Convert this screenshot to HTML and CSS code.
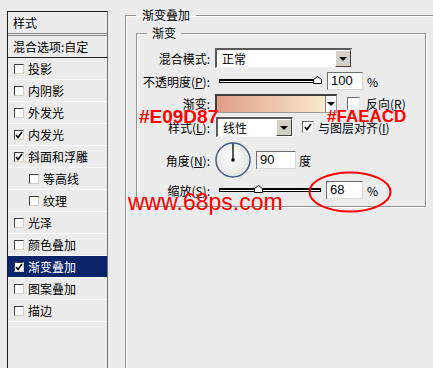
FILE: index.html
```html
<!DOCTYPE html>
<html lang="zh-CN">
<head>
  <meta charset="UTF-8">
  <title>图层样式 - 渐变叠加</title>
  <link rel="stylesheet" href="styles.css">
</head>
<body>

<div class="dialog">

  <div class="style-list">
    <div class="list-head">样式</div>
    <div class="list-blend">混合选项:自定</div>
    <div class="list-row"><span class="cb"></span>投影</div>
    <div class="list-row"><span class="cb"></span>内阴影</div>
    <div class="list-row"><span class="cb"></span>外发光</div>
    <div class="list-row"><span class="cb on"><svg viewBox="0 0 8 8"><polyline points="1,4 3,6.5 7,1" /></svg></span>内发光</div>
    <div class="list-row"><span class="cb on"><svg viewBox="0 0 8 8"><polyline points="1,4 3,6.5 7,1" /></svg></span>斜面和浮雕</div>
    <div class="list-row sub"><span class="cb"></span>等高线</div>
    <div class="list-row sub"><span class="cb"></span>纹理</div>
    <div class="list-row"><span class="cb"></span>光泽</div>
    <div class="list-row"><span class="cb"></span>颜色叠加</div>
    <div class="list-row active"><span class="cb on"><svg viewBox="0 0 8 8"><polyline points="1,4 3,6.5 7,1" /></svg></span>渐变叠加</div>
    <div class="list-row"><span class="cb"></span>图案叠加</div>
    <div class="list-row"><span class="cb"></span>描边</div>
  </div>

  <div class="settings">
    <fieldset class="group outer">
      <legend>渐变叠加</legend>
      <fieldset class="group inner">
        <legend>渐变</legend>

        <div class="row r-mode">
          <span class="label">混合模式:</span>
          <div class="select mode">正常<span class="drop"><i></i></span></div>
        </div>

        <div class="row r-opacity">
          <span class="label">不透明度(<u>P</u>):</span>
          <div class="slider">
            <span class="track"></span>
            <svg class="thumb" style="left: 98px" viewBox="0 0 9 8"><path d="M0.5 7.5 V3.5 L4.5 0.5 L8.5 3.5 V7.5 Z" /></svg>
          </div>
          <div class="field w36">100</div>
          <span class="unit">%</span>
        </div>

        <div class="row r-gradient">
          <span class="label">渐变:</span>
          <div class="gradient-box"><span class="ramp"></span><span class="ramp-drop"><i></i></span></div>
          <span class="check"></span>
          <span>反向(<u>R</u>)</span>
        </div>

        <div class="row r-style">
          <span class="label">样式(<u>L</u>):</span>
          <div class="select kind">线性<span class="drop"><i></i></span></div>
          <span class="check on"><svg viewBox="0 0 8 8"><polyline points="1,4 3,6.5 7,1" /></svg></span>
          <span>与图层对齐(<u>I</u>)</span>
        </div>

        <div class="row r-angle">
          <span class="label">角度(<u>N</u>):</span>
          <svg class="dial" viewBox="0 0 36 36">
            <defs>
              <radialGradient id="dialFill" cx="0.45" cy="0.4" r="0.6">
                <stop offset="0" stop-color="#ffffff" />
                <stop offset="1" stop-color="#e4e4e0" />
              </radialGradient>
            </defs>
            <circle cx="18" cy="18" r="17" fill="url(#dialFill)" stroke="#4c5c86" stroke-width="1.5" />
            <line x1="18" y1="18" x2="18" y2="1.5" stroke="#000" stroke-width="1.3" />
            <rect x="16.5" y="16.5" width="3" height="3" fill="#000" />
          </svg>
          <div class="field w40">90</div>
          <span class="unit">度</span>
        </div>

        <div class="row r-scale">
          <span class="label">缩放(<u>S</u>):</span>
          <div class="slider">
            <span class="track"></span>
            <svg class="thumb" style="left: 39px" viewBox="0 0 9 8"><path d="M0.5 7.5 V3.5 L4.5 0.5 L8.5 3.5 V7.5 Z" /></svg>
          </div>
          <div class="field w37">68</div>
          <span class="unit">%</span>
        </div>

      </fieldset>
    </fieldset>
  </div>

  <span class="note note-start">#E09D87</span>
  <span class="note note-end">#FAEACD</span>
  <span class="note note-site">www.68ps.com</span>
  <svg class="note-ring" viewBox="0 0 84 42"><ellipse cx="42" cy="21" rx="40.5" ry="19.5" /></svg>

</div>

</body>
</html>
```

FILE: styles.css
```css
body {
  margin: 0;
  background: #ececec;
  font-family: "Noto Sans CJK SC", "Liberation Sans", sans-serif;
  font-size: 12px;
  color: #000;
  overflow: hidden;
}

.dialog {
  position: relative;
  display: flex;
  height: 368px;
  overflow: hidden;
}

/* left list of layer styles */
.style-list {
  box-sizing: border-box;
  width: 101px;
  margin: 11px 0 0 7px;
  border: 1px solid #1a1a1a;
  border-bottom: none;
  border-right-color: #707070;
  flex-shrink: 0;
}

.list-head {
  height: 21px;
  line-height: 21px;
  padding-left: 5px;
  border-bottom: 3px double #8a8a8a;
}

.list-blend {
  box-sizing: border-box;
  height: 22px;
  line-height: 21px;
  padding-left: 5px;
  border-bottom: 1px solid #222;
}

.list-row {
  box-sizing: border-box;
  display: flex;
  align-items: center;
  height: 22px;
  padding-left: 6px;
  border-bottom: 1px solid #fafafa;
}

.list-row.sub {
  padding-left: 21px;
}

.list-row.active {
  background: #0a246a;
  color: #fff;
}

.cb {
  box-sizing: border-box;
  width: 10px;
  height: 10px;
  margin-right: 4px;
  background: #fff;
  border-top: 1px solid #404040;
  border-left: 1px solid #404040;
  border-bottom: 1px solid #d4d0c8;
  border-right: 1px solid #d4d0c8;
  display: flex;
}

.cb svg,
.check svg {
  width: 100%;
  height: 100%;
}

.cb polyline,
.check polyline {
  fill: none;
  stroke: #000;
  stroke-width: 1.6;
}

/* right settings */
.settings {
  flex: 1;
  overflow: hidden;
}

.group {
  margin: 0;
  border: 1px solid #919191;
  box-shadow: inset 1px 1px 0 #fff, 1px 1px 0 #fff;
}

.group legend {
  line-height: 16px;
  padding: 0 5px;
}

.outer {
  width: 420px;
  margin: 7px 0 0 17px;
  padding: 0 0 0 10px;
  border-right: none;
  border-bottom: none;
  height: 400px;
}

.outer > legend {
  padding: 0 6px 0 6px;
}

.inner {
  box-sizing: border-box;
  width: 290px;
  margin-top: 2px;
  padding: 7px 0 7px 5px;
}

.inner > legend {
  margin-left: 5px;
}

.row {
  display: flex;
  align-items: center;
  white-space: nowrap;
}

.label {
  width: 68px;
  margin-right: 5px;
  text-align: right;
}

.r-mode { height: 20px; }
.r-opacity { height: 20px; margin-top: 3px; }
.r-gradient { height: 20px; margin-top: 2px; }
.r-style { height: 20px; margin-top: 4px; }
.r-angle { height: 38px; margin-top: 4px; }
.r-scale { height: 18px; margin-top: 2px; }

.select {
  box-sizing: border-box;
  display: flex;
  align-items: center;
  justify-content: space-between;
  height: 20px;
  padding-left: 5px;
  background: #fff;
  border-top: 2px solid #5a5a5a;
  border-left: 2px solid #5a5a5a;
  border-bottom: 1px solid #f4f4f4;
  border-right: 1px solid #f4f4f4;
}

.select.mode { width: 137px; }
.select.kind { width: 77px; margin-left: 1px; }

.drop {
  box-sizing: border-box;
  display: flex;
  align-items: center;
  justify-content: center;
  width: 16px;
  height: 17px;
  background: #d4d0c8;
  border-top: 1px solid #fff;
  border-left: 1px solid #fff;
  border-bottom: 1px solid #404040;
  border-right: 1px solid #404040;
}

.drop i,
.ramp-drop i {
  width: 0;
  height: 0;
  border-left: 4px solid transparent;
  border-right: 4px solid transparent;
  border-top: 4px solid #000;
}

.slider {
  position: relative;
  width: 108px;
  height: 18px;
  display: flex;
  align-items: center;
}

.track {
  box-sizing: border-box;
  margin-left: 4px;
  width: 102px;
  height: 4px;
  background: #fff;
  border: 1px solid #000;
  border-top-width: 2px;
}

.thumb {
  position: absolute;
  top: 4px;
  width: 9px;
  height: 8px;
}

.thumb path {
  fill: #fff;
  stroke: #000;
  stroke-width: 1;
}

.field {
  box-sizing: border-box;
  height: 18px;
  line-height: 15px;
  padding-left: 3px;
  background: #fff;
  border-top: 1px solid #6e6e6e;
  border-left: 1px solid #6e6e6e;
  border-bottom: 1px solid #d8d8d8;
  border-right: 1px solid #d8d8d8;
  font-family: "Liberation Sans", sans-serif;
  font-size: 13px;
}

.w36 { width: 36px; margin-left: 4px; }
.w37 { width: 37px; margin-left: 3px; }
.w40 { width: 40px; margin-left: 5px; }

.unit {
  margin-left: 4px;
}

.r-angle .unit {
  margin-left: 3px;
}

.gradient-box {
  box-sizing: border-box;
  display: flex;
  width: 122px;
  height: 19px;
  border-top: 2px solid #404040;
  border-left: 2px solid #404040;
  border-bottom: 1px solid #9a9a9a;
  border-right: 1px solid #9a9a9a;
}

.ramp {
  flex: 1;
  background: linear-gradient(to right, #e09d87, #faeacd);
}

.ramp-drop {
  display: flex;
  align-items: center;
  justify-content: center;
  width: 10px;
  background: #fff;
  border-left: 1px solid #808080;
}

.check {
  box-sizing: border-box;
  display: flex;
  width: 13px;
  height: 13px;
  margin: 0 6px 0 10px;
  background: #fff;
  border-top: 1px solid #6a6a6a;
  border-left: 1px solid #6a6a6a;
  border-bottom: 1px solid #e4e4e4;
  border-right: 1px solid #e4e4e4;
}

.r-style .check {
  width: 12px;
  height: 12px;
  margin: 0 4px 0 9px;
  padding: 1px;
}

.dial {
  width: 36px;
  height: 36px;
  margin-left: 0;
}

/* red annotations painted over the dialog */
.note {
  position: absolute;
  color: #ff0000;
  font-family: "Liberation Sans", Arial, sans-serif;
  line-height: 1;
  white-space: nowrap;
}

.note-start {
  left: 139px;
  top: 107px;
  font-size: 19px;
  font-weight: bold;
}

.note-end {
  left: 327px;
  top: 108px;
  font-size: 17px;
  font-weight: bold;
}

.note-site {
  left: 128px;
  top: 191px;
  font-size: 23px;
}

.note-ring {
  position: absolute;
  left: 308px;
  top: 171px;
  width: 84px;
  height: 42px;
}

.note-ring ellipse {
  fill: none;
  stroke: #ff0000;
  stroke-width: 2;
}
```
